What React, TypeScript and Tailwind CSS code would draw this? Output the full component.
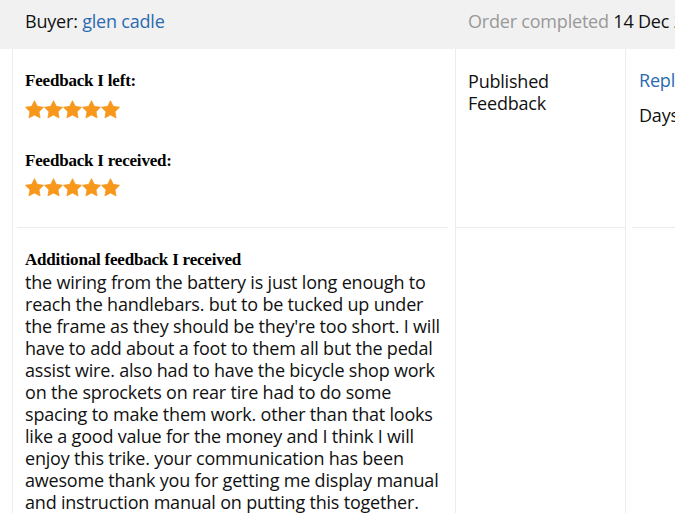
const sans = "font-['Open_Sans','Noto_Sans',sans-serif]";

const Star = () => (
  <svg viewBox="0 0 20 19.5" className="h-[19px] w-[19px]">
    <path
      d="M10 0.5L12.94 6.45L19.51 7.41L14.76 12.05L15.88 18.59L10 15.5L4.12 18.59L5.24 12.05L0.49 7.41L7.06 6.45Z"
      fill="#f7981d"
      stroke="#f7981d"
      strokeWidth="0.8"
      strokeLinejoin="round"
    />
  </svg>
);

const Stars = () => (
  <div className="flex">
    {[0, 1, 2, 3, 4].map((i) => (
      <Star key={i} />
    ))}
  </div>
);

const Heading: React.FC<{ children: React.ReactNode }> = ({ children }) => (
  <h3 className="font-['Liberation_Serif',serif] text-[17px] font-bold leading-[19px] text-black">
    {children}
  </h3>
);

// wrapped the way the original page wraps it
const commentLines = [
  "the wiring from the battery is just long enough to",
  "reach the handlebars. but to be tucked up under",
  "the frame as they should be they're too short. I will",
  "have to add about a foot to them all but the pedal",
  "assist wire. also had to have the bicycle shop work",
  "on the sprockets on rear tire had to do some",
  "spacing to make them work. other than that looks",
  "like a good value for the money and I think I will",
  "enjoy this trike. your communication has been",
  "awesome thank you for getting me display manual",
  "and instruction manual on putting this together.",
];

export default function App() {
  return (
    <div
      className={`h-[525px] w-[675px] overflow-hidden bg-white text-[18px] leading-[22px] tracking-[-0.2px] text-[#111] ${sans}`}
    >
      <header className="grid h-[49px] grid-cols-[455px_170px_1fr] items-center bg-[#f1f1f1] pb-[7px]">
        <div className="pl-[25px]">
          Buyer: <a className="text-[#2a6bb0]">glen cadle</a>
        </div>
        <div className="whitespace-nowrap pl-[13px]">
          <span className="text-[#999]">Order completed</span> 14 Dec 2019
        </div>
        <div />
      </header>

      <div className="ml-[12px] grid grid-cols-[443px_170px_1fr]">
        <section className="border-l border-[#ececec]">
          <div className="mr-[7px] ml-[4px] h-[179px] border-b border-[#ececec] pl-[8px] pt-[22px]">
            <Heading>Feedback I left:</Heading>
            <div className="mt-[10px]">
              <Stars />
            </div>
            <div className="mt-[32px]">
              <Heading>Feedback I received:</Heading>
            </div>
            <div className="mt-[8px]">
              <Stars />
            </div>
          </div>
          <div className="pl-[12px] pt-[22px]">
            <Heading>Additional feedback I received</Heading>
            <p className="mt-[2px] whitespace-nowrap">
              {commentLines.map((line, i) => (
                <span key={i} className="block">
                  {line}
                </span>
              ))}
            </p>
          </div>
        </section>

        <section className="border-l border-[#ececec]">
          <div className="h-[179px] border-b border-[#ececec] pl-[12px] pt-[21px]">
            <p className="w-[100px]">Published Feedback</p>
          </div>
        </section>

        <section className="border-l border-[#ececec]">
          <div className="ml-[6px] h-[179px] whitespace-nowrap border-b border-[#ececec] pl-[7px] pt-[20px]">
            <a className="text-[#2a6bb0]">Reply</a>
            <p className="mt-[13px]">Days left: 30</p>
          </div>
        </section>
      </div>
    </div>
  );
}
